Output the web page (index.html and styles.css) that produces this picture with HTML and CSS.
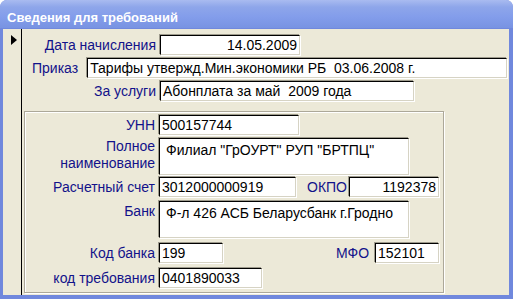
FILE: index.html
```html
<!DOCTYPE html>
<html lang="ru">
<head>
  <meta charset="UTF-8" />
  <title>Сведения для требований</title>
  <link rel="stylesheet" href="styles.css">
</head>
<body>
  <div class="window">
    <div class="titlebar">Сведения для требований</div>
    <div class="client">
      <div class="selector">
        <svg width="6" height="10" viewBox="0 0 6 10"><path d="M0 0 L6 5 L0 10 Z" fill="#000"/></svg>
      </div>
      <div class="form">
        <div class="row">
          <label class="lbl">Дата начисления</label>
          <div class="field w140 right">14.05.2009</div>
        </div>
        <div class="row row-order mt3">
          <label class="lbl-free">Приказ</label>
          <div class="field w420">Тарифы утвержд.Мин.экономики РБ&nbsp; 03.06.2008 г.</div>
        </div>
        <div class="row mt3">
          <label class="lbl">За услуги</label>
          <div class="field w254">Абонплата за май&nbsp; 2009 года</div>
        </div>

        <div class="group">
          <div class="row">
            <label class="lbl">УНН</label>
            <div class="field w140">500157744</div>
          </div>
          <div class="row tall mt3">
            <label class="lbl two">Полное<br>наименование</label>
            <div class="field memo w250">Филиал "ГрОУРТ" РУП "БРТПЦ"</div>
          </div>
          <div class="row mt2">
            <label class="lbl">Расчетный счет</label>
            <div class="field w137">3012000000919</div>
            <label class="lbl-free okpo">ОКПО</label>
            <div class="field w90 right">1192378</div>
          </div>
          <div class="row tall mt4">
            <label class="lbl top">Банк</label>
            <div class="field memo w250">Ф-л 426 АСБ Беларусбанк г.Гродно</div>
          </div>
          <div class="row mt5">
            <label class="lbl">Код банка</label>
            <div class="field w64">199</div>
            <label class="lbl-free mfo">МФО</label>
            <div class="field w64">152101</div>
          </div>
          <div class="row mt5">
            <label class="lbl">код требования</label>
            <div class="field w103">0401890033</div>
          </div>
        </div>
      </div>
    </div>
  </div>
</body>
</html>
```

FILE: styles.css
```css
body {
  margin: 0;
  background: #fff;
  font-family: "Liberation Sans", Arial, sans-serif;
  font-size: 14px;
}
.window {
  width: 513px;
  height: 299px;
  box-sizing: border-box;
  display: flex;
  flex-direction: column;
  background: #7088dd;
  border-radius: 7px 7px 0 0;
  overflow: hidden;
}
.titlebar {
  height: 29px;
  flex: none;
  box-sizing: border-box;
  padding: 10px 0 0 7px;
  color: #fff;
  font-weight: bold;
  font-size: 13px;
  background: linear-gradient(#a9bbf0, #8ea6ea 25%, #839deb 60%, #7893e2 100%);
  border-bottom: 1px solid #7088dd;
}
.client {
  flex: 1;
  display: flex;
  background: #ece9d8;
  margin: 0 4px 4px 3px;
}
.selector {
  width: 19px;
  flex: none;
  border-right: 1px solid #000;
  padding: 3px 0 0 8px;
  box-sizing: border-box;
}
.form {
  flex: 1;
  display: flex;
  flex-direction: column;
  padding-top: 6px;
}
.row {
  display: flex;
  align-items: center;
  height: 20px;
  flex: none;
}
.mt2 { margin-top: 2px; }
.mt3 { margin-top: 3px; }
.mt4 { margin-top: 4px; }
.mt5 { margin-top: 5px; }
.lbl {
  width: 134px;
  margin-right: 4px;
  text-align: right;
  color: #12128a;
  white-space: nowrap;
  flex: none;
}
.lbl-free {
  color: #12128a;
  white-space: nowrap;
  flex: none;
}
.row-order .lbl-free {
  margin: 0 9px 0 10px;
}
.field {
  height: 20px;
  box-sizing: border-box;
  background: #fff;
  color: #000;
  border-top: 1px solid #000;
  border-left: 1px solid #000;
  border-right: 1px solid #d6d3c4;
  border-bottom: 1px solid #d6d3c4;
  box-shadow: -1px -1px 0 #9d9a8c, 1px 1px 0 #fff;
  padding: 1px 2px 0 2px;
  line-height: 16px;
  white-space: nowrap;
  overflow: hidden;
  flex: none;
}
.right {
  text-align: right;
}
.w140 { width: 140px; }
.w420 { width: 420px; }
.w254 { width: 254px; }
.w250 { width: 250px; }
.w137 { width: 137px; }
.w90 { width: 90px; }
.w64 { width: 64px; }
.w103 { width: 103px; }
.group {
  width: 420px;
  height: 182px;
  box-sizing: border-box;
  display: flex;
  flex-direction: column;
  margin: 10px 0 0 2px;
  padding-top: 3px;
  border: 1px solid #aca899;
  box-shadow: inset 1px 1px 0 #fff, 1px 1px 0 #fff;
}
.group .lbl {
  width: 130px;
}
.tall {
  height: 37px;
  align-items: flex-start;
}
.memo {
  height: 37px;
  padding: 3px 6px;
}
.lbl.two {
  line-height: 17px;
}
.lbl.top {
  margin-top: 2px;
}
.okpo {
  margin: 0 2px 0 11px;
}
.mfo {
  margin: 0 6px 0 113px;
}
```
